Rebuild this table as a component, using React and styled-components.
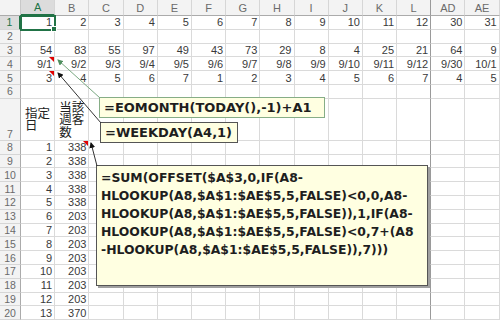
import React from 'react';
import styled, { createGlobalStyle, css } from 'styled-components';

const GlobalStyle = createGlobalStyle`
  html, body {
    margin: 0;
    padding: 0;
    background: #ffffff;
  }
`;

const COLS = ['A', 'B', 'C', 'D', 'E', 'F', 'G', 'H', 'I', 'J', 'K', 'L', 'AD', 'AE'];

const TOP_ROWS = [
  [1, 2, 3, 4, 5, 6, 7, 8, 9, 10, 11, 12, 30, 31],
  [],
  [54, 83, 55, 97, 49, 43, 73, 29, 8, 4, 25, 21, 64, 9],
  ['9/1', '9/2', '9/3', '9/4', '9/5', '9/6', '9/7', '9/8', '9/9', '9/10', '9/11', '9/12', '9/30', '10/1'],
  [3, 4, 5, 6, 7, 1, 2, 3, 4, 5, 6, 7, 4, 5],
  [],
];

const VISITORS = [338, 338, 338, 338, 338, 203, 203, 203, 203, 203, 203, 203, 370];

// cells carrying a comment marker (red corner)
const NOTES = { '4-0': true, '5-0': true, '8-1': true };

const Sheet = styled.div`
  position: relative;
  width: 500px;
  height: 320px;
  overflow: hidden;
  background: #fff;
  font-family: "Liberation Sans", "Noto Sans CJK JP", sans-serif;
`;

const Grid = styled.div`
  display: grid;
  grid-template-columns: 21px repeat(14, 34.2px);
  grid-template-rows: 16px repeat(6, 13.8px) 42px repeat(13, 13.8px);
`;

const Corner = styled.div`
  background: #f3f3f3;
  border-right: 1px solid #c8c8c8;
  border-bottom: 1px solid #ababab;
`;

const ColHeader = styled.div`
  display: flex;
  align-items: center;
  justify-content: center;
  font-size: 11px;
  color: #6a6a6a;
  background: #f3f3f3;
  border-right: 1px solid ${(p) => (p.$split ? '#9a9a9a' : '#d6d6d6')};
  border-bottom: 1px solid #ababab;
  box-sizing: border-box;
  ${(p) =>
    p.$active &&
    css`
      background: #dcdcdc;
      color: #217346;
      border-bottom: 2px solid #217346;
    `}
`;

const RowHeader = styled.div`
  display: flex;
  align-items: ${(p) => (p.$tall ? 'flex-end' : 'center')};
  justify-content: center;
  font-size: 10.5px;
  line-height: 12px;
  color: #6a6a6a;
  background: #f3f3f3;
  border-right: 1px solid #ababab;
  border-bottom: 1px solid #d6d6d6;
  box-sizing: border-box;
  ${(p) =>
    p.$active &&
    css`
      background: #dcdcdc;
      color: #217346;
      border-right: 2px solid #217346;
    `}
`;

const Cell = styled.div`
  position: relative;
  display: flex;
  align-items: center;
  justify-content: ${(p) => (p.$left ? 'flex-start' : 'flex-end')};
  padding: 0 2px;
  font-size: 11px;
  color: #3a3a3a;
  border-right: 1px solid ${(p) => (p.$split ? '#9a9a9a' : '#dadada')};
  border-bottom: 1px solid #dadada;
  box-sizing: border-box;
  white-space: nowrap;

  ${(p) =>
    p.$note &&
    css`
      &::before {
        content: '';
        position: absolute;
        top: 0;
        right: 0;
        border-top: 5px solid #e00000;
        border-left: 5px solid transparent;
      }
    `}

  ${(p) =>
    p.$selected &&
    css`
      outline: 2px solid #217346;
      outline-offset: -1px;
      z-index: 1;
      &::after {
        content: '';
        position: absolute;
        right: -3px;
        bottom: -3px;
        width: 4px;
        height: 4px;
        background: #217346;
        border: 1px solid #fff;
      }
    `}
`;

const Wrapped = styled.div`
  font-family: "Noto Sans CJK JP", sans-serif;
  font-size: 12.5px;
  line-height: 12.5px;
  color: #222;
  width: ${(p) => p.$width}px;
  white-space: normal;
  word-break: break-all;
  padding-left: 2px;
`;

const Callout = styled.div`
  position: absolute;
  left: ${(p) => p.$x}px;
  top: ${(p) => p.$y}px;
  width: ${(p) => p.$w}px;
  height: ${(p) => p.$h}px;
  box-sizing: border-box;
  padding: ${(p) => (p.$multi ? '3px 4px' : '0 4px')};
  display: flex;
  flex-direction: column;
  justify-content: ${(p) => (p.$multi ? 'flex-start' : 'center')};
  background: #ffffe1;
  border: 1px solid ${(p) => p.$border};
  box-shadow: ${(p) => (p.$shadow ? '2px 2px 0 #a0a0a0' : 'none')};
  font-family: "DejaVu Sans", Verdana, sans-serif;
  font-weight: bold;
  font-size: ${(p) => p.$size || 13}px;
  line-height: 18px;
  color: #1e1e1e;
  white-space: nowrap;
  z-index: 3;
`;

const Arrows = styled.svg`
  position: absolute;
  left: 0;
  top: 0;
  z-index: 4;
  pointer-events: none;
`;

const SUM_LINES = [
  '=SUM(OFFSET($A$3,0,IF(A8-',
  'HLOOKUP(A8,$A$1:$AE$5,5,FALSE)<0,0,A8-',
  'HLOOKUP(A8,$A$1:$AE$5,5,FALSE)),1,IF(A8-',
  'HLOOKUP(A8,$A$1:$AE$5,5,FALSE)<0,7+(A8',
  '-HLOOKUP(A8,$A$1:$AE$5,5,FALSE)),7)))',
];

const App = () => {
  const rows = [];

  TOP_ROWS.forEach((vals, i) => {
    const r = i + 1;
    rows.push(
      <RowHeader key={`h${r}`} $active={r === 1}>
        {r}
      </RowHeader>
    );
    COLS.forEach((c, ci) => {
      rows.push(
        <Cell
          key={`${r}-${ci}`}
          $split={ci === 11}
          $selected={r === 1 && ci === 0}
          $note={NOTES[`${r}-${ci}`]}
        >
          {vals[ci]}
        </Cell>
      );
    });
  });

  rows.push(
    <RowHeader key="h7" $tall>
      7
    </RowHeader>
  );
  COLS.forEach((c, ci) => {
    let content = null;
    if (ci === 0) content = <Wrapped $width={27}>指定日</Wrapped>;
    if (ci === 1) content = <Wrapped $width={27}>当該週客数</Wrapped>;
    rows.push(
      <Cell key={`7-${ci}`} $left $split={ci === 11}>
        {content}
      </Cell>
    );
  });

  VISITORS.forEach((v, i) => {
    const r = i + 8;
    rows.push(<RowHeader key={`h${r}`}>{r}</RowHeader>);
    COLS.forEach((c, ci) => {
      let content = null;
      if (ci === 0) content = i + 1;
      if (ci === 1) content = v;
      rows.push(
        <Cell key={`${r}-${ci}`} $split={ci === 11} $note={NOTES[`${r}-${ci}`]}>
          {content}
        </Cell>
      );
    });
  });

  return (
    <>
      <GlobalStyle />
      <Sheet>
        <Grid>
          <Corner />
          {COLS.map((c, ci) => (
            <ColHeader key={c} $active={ci === 0} $split={ci === 11}>
              {c}
            </ColHeader>
          ))}
          {rows}
        </Grid>

        <Callout $x={99} $y={97} $w={226} $h={21} $border="#86ad86">
          =EOMONTH(TODAY(),-1)+A1
        </Callout>
        <Callout $x={100} $y={122} $w={138} $h={21} $border="#555555">
          =WEEKDAY(A4,1)
        </Callout>
        <Callout $x={96} $y={165} $w={332} $h={121} $border="#555555" $shadow $multi $size={12.4}>
          {SUM_LINES.map((l) => (
            <span key={l}>{l}</span>
          ))}
        </Callout>

        <Arrows width="500" height="320" viewBox="0 0 500 320">
          <defs>
            <marker id="headGreen" markerWidth="6" markerHeight="6" refX="5" refY="3" orient="auto">
              <path d="M0,0 L6,3 L0,6 Z" fill="#4f8f5f" />
            </marker>
            <marker id="headBlack" markerWidth="6" markerHeight="6" refX="5" refY="3" orient="auto">
              <path d="M0,0 L6,3 L0,6 Z" fill="#111" />
            </marker>
          </defs>
          <line x1="100" y1="98" x2="58" y2="60" stroke="#7aa882" strokeWidth="1" markerEnd="url(#headGreen)" />
          <line x1="101" y1="123" x2="58" y2="73" stroke="#333" strokeWidth="1" markerEnd="url(#headBlack)" />
          <line x1="97" y1="166" x2="91" y2="143" stroke="#333" strokeWidth="1" markerEnd="url(#headBlack)" />
        </Arrows>
      </Sheet>
    </>
  );
};

export default App;
